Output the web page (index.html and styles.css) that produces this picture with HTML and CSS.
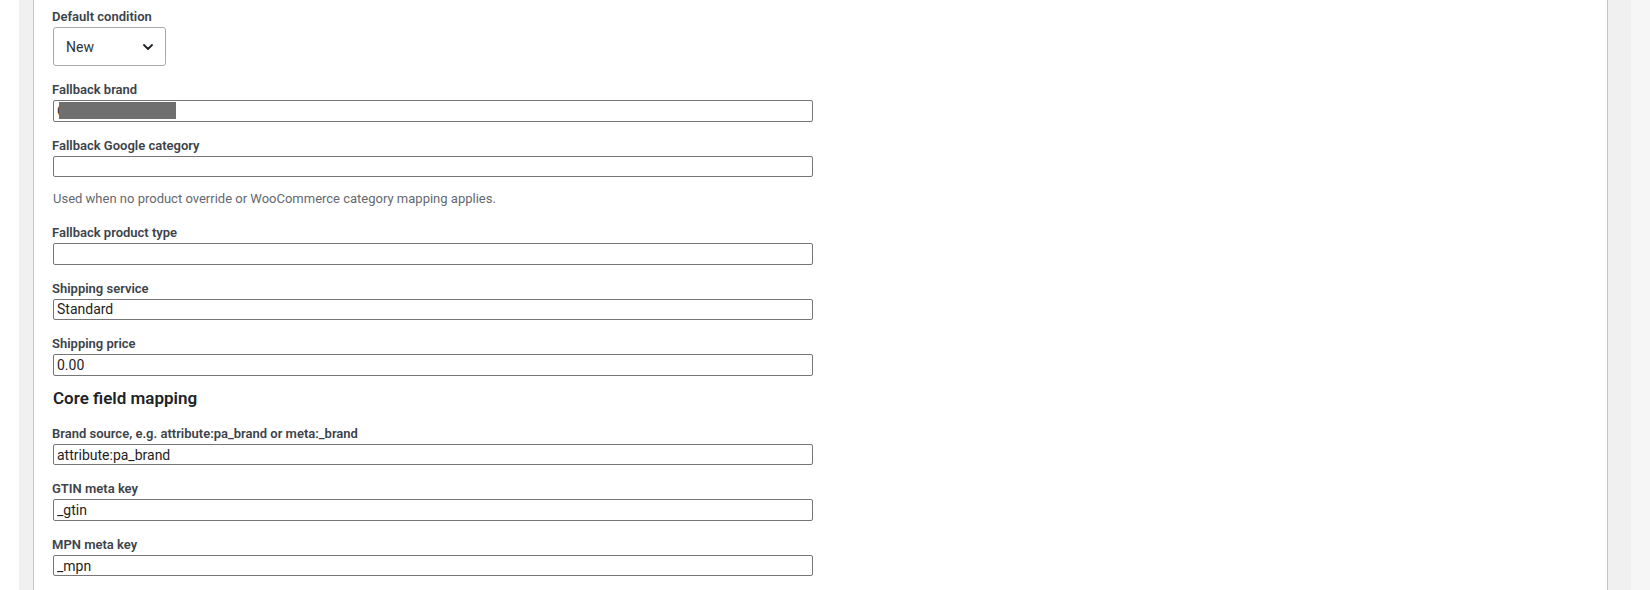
FILE: index.html
```html
<!DOCTYPE html>
<html lang="en">
<head>
<meta charset="utf-8">
<title>Feed settings</title>
<link rel="stylesheet" href="styles.css">
</head>
<body>
<div class="gutter-left"></div>
<div class="wrap">
  <div class="panel">
    <form class="form">
      <div class="field field-first">
        <label class="label" for="cond">Default condition</label>
        <div class="select-wrap">
          <select id="cond" class="select">
            <option>New</option>
            <option>Used</option>
            <option>Refurbished</option>
          </select>
          <svg class="chev" width="10" height="6" viewBox="0 0 10 6" aria-hidden="true"><path d="M1 1l4 4 4-4" fill="none" stroke="#1d2327" stroke-width="1.8" stroke-linecap="round" stroke-linejoin="round"/></svg>
        </div>
      </div>
      <div class="field">
        <label class="label" for="brand">Fallback brand</label>
        <div class="input-wrap">
          <input id="brand" class="input" type="text" value="C">
          <span class="redact"></span>
        </div>
      </div>
      <div class="field">
        <label class="label" for="gcat">Fallback Google category</label>
        <input id="gcat" class="input" type="text" value="">
        <p class="desc">Used when no product override or WooCommerce category mapping applies.</p>
      </div>
      <div class="field field-after-desc">
        <label class="label" for="ptype">Fallback product type</label>
        <input id="ptype" class="input" type="text" value="">
      </div>
      <div class="field">
        <label class="label" for="ship">Shipping service</label>
        <input id="ship" class="input" type="text" value="Standard">
      </div>
      <div class="field">
        <label class="label" for="price">Shipping price</label>
        <input id="price" class="input" type="text" value="0.00">
      </div>
      <h2 class="heading">Core field mapping</h2>
      <div class="field field-after-heading">
        <label class="label" for="bsrc">Brand source, e.g. attribute:pa_brand or meta:_brand</label>
        <input id="bsrc" class="input" type="text" value="attribute:pa_brand">
      </div>
      <div class="field">
        <label class="label" for="gtin">GTIN meta key</label>
        <input id="gtin" class="input" type="text" value="_gtin">
      </div>
      <div class="field">
        <label class="label" for="mpn">MPN meta key</label>
        <input id="mpn" class="input" type="text" value="_mpn">
      </div>
    </form>
  </div>
</div>
<div class="gutter-right"></div>
</body>
</html>
```

FILE: styles.css
```css
html, body {
  margin: 0;
  padding: 0;
  height: 590px;
  overflow: hidden;
}
body {
  display: flex;
  background: #ffffff;
  font-family: Roboto, "Liberation Sans", Arial, sans-serif;
  color: #1d2327;
}
.gutter-left {
  flex: 0 0 19px;
  background: #ffffff;
}
.wrap {
  flex: 0 0 1612px;
  box-sizing: border-box;
  padding: 0 23px 0 14px;
  background: #f0f0f1;
  display: flex;
}
.gutter-right {
  flex: 1 1 auto;
  background: #f6f6f6;
}
.panel {
  flex: 1 1 auto;
  background: #ffffff;
  border-left: 1px solid #c3c4c7;
  border-right: 1px solid #c3c4c7;
  padding: 9px 19px 0 19px;
  overflow: hidden;
}
.form {
  display: flex;
  flex-direction: column;
  align-items: flex-start;
}
.field {
  display: flex;
  flex-direction: column;
  align-items: flex-start;
  margin-top: 16px;
}
.field-first {
  margin-top: 0;
}
.field-after-desc {
  margin-top: 17.5px;
}
.field-after-heading {
  margin-top: 16.5px;
}
.label {
  display: block;
  font-size: 13px;
  line-height: 16px;
  font-weight: 600;
  color: #3c434a;
  margin: 0 0 2px -1px;
}
.select-wrap {
  position: relative;
  display: inline-block;
}
.select {
  -webkit-appearance: none;
  appearance: none;
  box-sizing: border-box;
  width: 113px;
  height: 39px;
  margin: 0;
  padding: 0 26px 0 12px;
  border: 1px solid #a7aaad;
  border-radius: 3px;
  background: #ffffff;
  font-family: Roboto, "Liberation Sans", Arial, sans-serif;
  font-size: 14px;
  color: #2c3338;
}
.chev {
  position: absolute;
  left: 90px;
  top: 17px;
  pointer-events: none;
}
.input-wrap {
  position: relative;
}
.input {
  box-sizing: border-box;
  width: 760px;
  height: 21.5px;
  margin: 0;
  padding: 0 3px;
  border: 1px solid #767676;
  border-radius: 2px;
  background: #ffffff;
  font-family: Roboto, "Liberation Sans", Arial, sans-serif;
  font-size: 14px;
  color: #1e1e1e;
}
.redact {
  position: absolute;
  left: 6px;
  top: 2.3px;
  width: 117px;
  height: 16.5px;
  background: #6f6f6f;
}
.desc {
  margin: 12.6px 0 0 0;
  font-size: 13px;
  line-height: 18px;
  color: #646970;
}
.heading {
  margin: 11px 0 0 0;
  font-size: 17px;
  line-height: 22.75px;
  font-weight: 600;
  color: #1d2327;
}
```
